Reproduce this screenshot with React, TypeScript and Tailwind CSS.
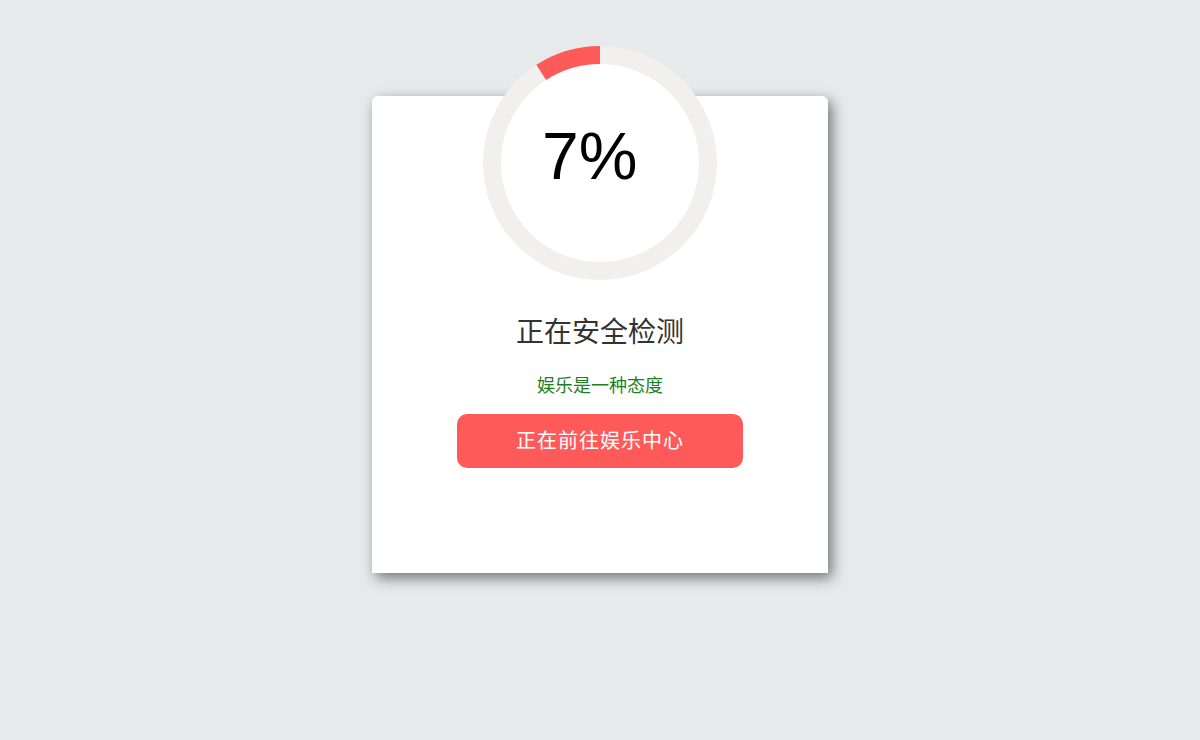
export default function App() {
  const r = 108;
  const deg = 33;
  const ex = 117 - r * Math.sin((deg * Math.PI) / 180);
  const ey = 117 - r * Math.cos((deg * Math.PI) / 180);

  return (
    <div
      className="min-h-screen w-full bg-[#e6eaea] pt-[96px]"
      style={{ fontFamily: '"Liberation Sans", "Noto Sans CJK SC", sans-serif' }}
    >
      <div className="mx-auto flex h-[477px] w-[456px] flex-col items-center rounded-t-[6px] bg-white shadow-[4px_5px_14px_rgba(0,0,0,0.5)]">
        <div className="relative -mt-[50px] h-[234px] w-[234px]">
          <svg width="234" height="234" viewBox="0 0 234 234" className="block">
            <circle cx="117" cy="117" r={r} fill="white" stroke="#f2f0ef" strokeWidth="18" />
            <path
              d={`M117 9 A${r} ${r} 0 0 0 ${ex.toFixed(2)} ${ey.toFixed(2)}`}
              fill="none"
              stroke="#ff5a5a"
              strokeWidth="18"
              strokeLinecap="butt"
            />
          </svg>
          <div className="absolute left-[59px] top-[77px] text-[66px] leading-none text-black">7%</div>
        </div>
        <h1 className="mt-[32px] text-[28px] leading-[42px] font-normal text-[#333]">正在安全检测</h1>
        <p className="mt-[19px] text-[18px] leading-[27px] text-[#1d801d]">娱乐是一种态度</p>
        <button className="mt-[14px] flex h-[54px] w-[286px] items-center justify-center rounded-[10px] bg-[#ff5a5a] text-[20px] tracking-[1px] text-white">
          正在前往娱乐中心
        </button>
      </div>
    </div>
  );
}
